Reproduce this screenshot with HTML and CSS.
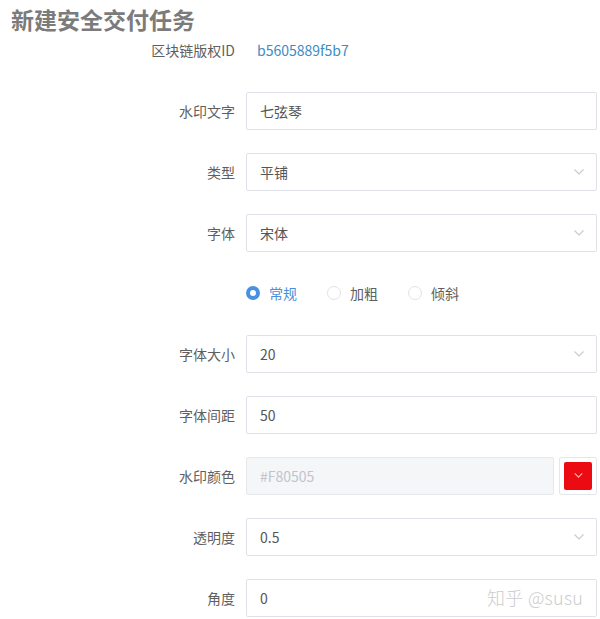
FILE: index.html
```html
<!DOCTYPE html>
<html lang="zh">
<head>
<meta charset="utf-8">
<title>新建安全交付任务</title>
<link rel="stylesheet" href="styles.css">
</head>
<body>
<div class="page">
  <h1 class="title">新建安全交付任务</h1>
  <div class="form">
    <div class="row">
      <span class="label">区块链版权ID</span>
      <span class="value">b5605889f5b7</span>
    </div>
    <div class="row">
      <span class="label">水印文字</span>
      <div class="input">七弦琴</div>
    </div>
    <div class="row">
      <span class="label">类型</span>
      <div class="input select">平铺<svg class="chev" viewBox="0 0 10 6" width="10" height="6"><polyline points="0.5,0.5 5,5 9.5,0.5"/></svg></div>
    </div>
    <div class="row">
      <span class="label">字体</span>
      <div class="input select">宋体<svg class="chev" viewBox="0 0 10 6" width="10" height="6"><polyline points="0.5,0.5 5,5 9.5,0.5"/></svg></div>
    </div>
    <div class="row">
      <span class="label"></span>
      <div class="radios">
        <span class="radio checked"><span class="dot"></span>常规</span>
        <span class="radio"><span class="dot"></span>加粗</span>
        <span class="radio"><span class="dot"></span>倾斜</span>
      </div>
    </div>
    <div class="row">
      <span class="label">字体大小</span>
      <div class="input select">20<svg class="chev" viewBox="0 0 10 6" width="10" height="6"><polyline points="0.5,0.5 5,5 9.5,0.5"/></svg></div>
    </div>
    <div class="row">
      <span class="label">字体间距</span>
      <div class="input">50</div>
    </div>
    <div class="row">
      <span class="label">水印颜色</span>
      <div class="color-field">
        <div class="input disabled">#F80505</div>
        <div class="picker"><div class="swatch"><svg class="chev-w" viewBox="0 0 10 6" width="9" height="5"><polyline points="0.5,0.5 5,5 9.5,0.5"/></svg></div></div>
      </div>
    </div>
    <div class="row">
      <span class="label">透明度</span>
      <div class="input select">0.5<svg class="chev" viewBox="0 0 10 6" width="10" height="6"><polyline points="0.5,0.5 5,5 9.5,0.5"/></svg></div>
    </div>
    <div class="row">
      <span class="label">角度</span>
      <div class="input">0</div>
    </div>
  </div>
  <div class="watermark">知乎 @susu</div>
</div>
</body>
</html>
```

FILE: styles.css
```css
html, body {
  margin: 0;
  padding: 0;
  background: #fff;
}
body {
  font-family: "Noto Sans CJK SC", "Noto Sans", sans-serif;
  color: #555;
}
.page {
  position: relative;
  width: 600px;
  height: 619px;
  overflow: hidden;
}
.title {
  margin: 0;
  padding: 8px 0 0 11px;
  height: 23px;
  font-size: 23px;
  line-height: 23px;
  font-weight: 700;
  color: #7b7b7b;
}
.form {
  display: flex;
  flex-direction: column;
  gap: 22.85px;
}
.row {
  display: grid;
  grid-template-columns: 235px 351px;
  column-gap: 11px;
  height: 38px;
  align-items: center;
}
.label {
  text-align: right;
  font-size: 14px;
  color: #5f5f5f;
}
.value {
  padding-left: 11px;
  font-size: 14px;
  color: #3b8cc4;
}
.input {
  box-sizing: border-box;
  height: 38px;
  border: 1px solid #dfe2e8;
  border-radius: 2px;
  padding: 0 12px 0 13px;
  display: flex;
  align-items: center;
  font-size: 14px;
  color: #555;
}
.select .chev {
  margin-left: auto;
}
.chev polyline {
  fill: none;
  stroke: #c6cad2;
  stroke-width: 1.1;
}
.radios {
  display: flex;
  align-items: center;
  font-size: 14px;
  color: #606060;
}
.radio {
  display: flex;
  align-items: center;
  margin-right: 30px;
}
.radio .dot {
  box-sizing: border-box;
  width: 14px;
  height: 14px;
  border-radius: 50%;
  border: 1px solid #e0e3e8;
  background: #fff;
  margin-right: 9px;
}
.radio.checked {
  color: #4a90d9;
}
.radio.checked .dot {
  border: 4.5px solid #4a90e2;
  background: #fff;
}
.color-field {
  display: flex;
  gap: 5px;
}
.input.disabled {
  flex: 1;
  background: #f5f6f8;
  border-color: #e6e8ec;
  color: #c0c4cc;
}
.picker {
  box-sizing: border-box;
  width: 38px;
  height: 38px;
  border: 1px solid #e4e7ed;
  border-radius: 2px;
  padding: 4px;
}
.swatch {
  width: 100%;
  height: 100%;
  background: #ec0b12;
  border-radius: 2px;
  display: flex;
  align-items: center;
  justify-content: center;
}
.chev-w polyline {
  fill: none;
  stroke: #f7b7b7;
  stroke-width: 1.3;
}
.watermark {
  position: absolute;
  left: 487px;
  top: 584px;
  font-size: 18px;
  line-height: 26px;
  font-weight: 300;
  color: #cdcdcd;
  letter-spacing: 0.3px;
}
```
